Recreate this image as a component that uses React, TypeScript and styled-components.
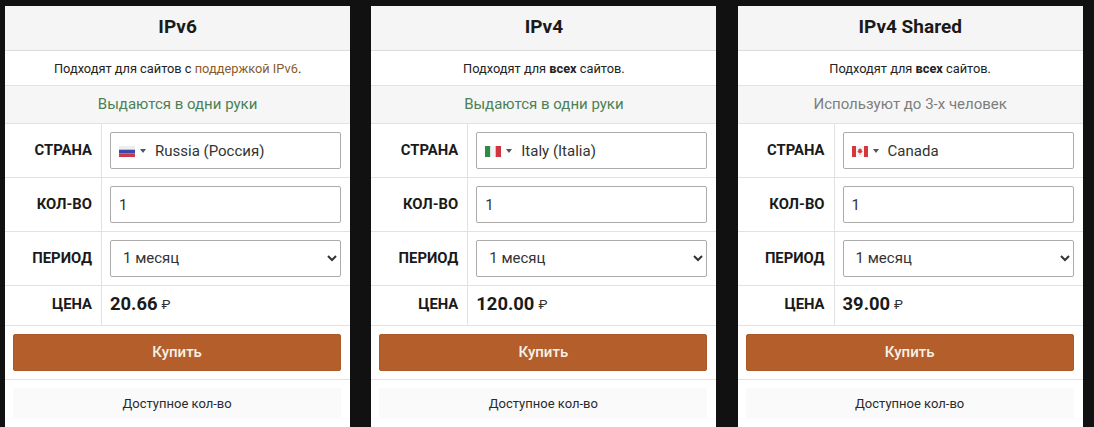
import React from 'react';

import styled, { createGlobalStyle } from 'styled-components';

const GlobalStyle = createGlobalStyle`
  html, body {
    margin: 0;
    padding: 0;
    height: 427px;
    overflow: hidden;
    background: #111111;
    font-family: Roboto, "Liberation Sans", sans-serif;
  }
`;

const Page = styled.div`
  width: 1094px;
  height: 427px;
  overflow: hidden;
  display: grid;
  grid-template-columns: repeat(3, 345.2px);
  column-gap: 21.1px;
  padding: 6px 0 0 5px;
  box-sizing: border-box;
`;

const Card = styled.section`
  background: #ffffff;
  color: #1c1c1c;
  height: 421px;
`;

const Title = styled.h2`
  margin: 0;
  height: 45px;
  padding-bottom: 3px;
  background: #f5f5f5;
  border-bottom: 1.5px solid #dcdcdc;
  box-sizing: border-box;
  display: flex;
  align-items: center;
  justify-content: center;
  font-size: 19px;
  font-weight: 700;
  color: #1a1a1a;
`;

const Note = styled.div`
  height: 34px;
  border-bottom: 1px solid #e2e2e2;
  display: flex;
  align-items: center;
  justify-content: center;
  white-space: pre;
  font-size: 12.8px;
  color: #222222;
`;

const Accent = styled.span`
  color: #8a5a2b;
`;

const Strong = styled.b`
  font-weight: 700;
`;

const Audience = styled.div<{ $shared?: boolean }>`
  height: 36px;
  padding-bottom: 1px;
  background: #f6f6f6;
  border-bottom: 1px solid #e2e2e2;
  display: flex;
  align-items: center;
  justify-content: center;
  font-size: 15px;
  color: ${(props) => (props.$shared ? '#7d7d7d' : '#4c8055')};
`;

const Row = styled.div<{ $height: number }>`
  height: ${(props) => props.$height}px;
  display: grid;
  grid-template-columns: 97px 1fr;
  border-bottom: 1px solid #e2e2e2;
`;

const Label = styled.div<{ $lift?: number }>`
  display: flex;
  align-items: center;
  justify-content: flex-end;
  padding-right: 9px;
  padding-bottom: ${(props) => props.$lift ?? 2}px;
  font-size: 14.8px;
  font-weight: 700;
  color: #1a1a1a;
  border-right: 1px solid #e2e2e2;
`;

const Cell = styled.div<{ $lift?: number }>`
  display: flex;
  align-items: center;
  padding: 0 9px ${(props) => props.$lift ?? 0}px 8px;
`;

const fieldStyles = `
  width: 100%;
  height: 37px;
  box-sizing: border-box;
  border: 1px solid #ababab;
  border-radius: 2px;
  background: #ffffff;
  font-family: Roboto, "Liberation Sans", sans-serif;
  font-size: 15px;
  color: #333333;
`;

const CountryField = styled.div`
  ${fieldStyles}
  display: flex;
  align-items: center;
  padding-left: 8px;
`;

const FlagWrap = styled.span`
  display: flex;
  width: 16px;
  height: 11px;
  margin-top: 1px;
`;

const FlagCaret = styled.span`
  width: 0;
  height: 0;
  margin: 0 9px 0 5px;
  border-left: 3px solid transparent;
  border-right: 3px solid transparent;
  border-top: 4px solid #555555;
`;

const NumberField = styled.input`
  ${fieldStyles}
  padding: 0 0 0 8px;
  outline: none;
`;

const PeriodField = styled.select`
  ${fieldStyles}
  padding: 0 0 2px 8px;
  outline: none;
`;

const PriceValue = styled.span`
  font-size: 18.4px;
  font-weight: 700;
  color: #1a1a1a;
`;

const Currency = styled.span`
  font-size: 13.5px;
  margin: 2px 0 0 4px;
  color: #333333;
`;

const ButtonRow = styled.div`
  height: 53px;
  display: flex;
  align-items: center;
  padding: 0 9px 0 8px;
  border-bottom: 1px solid #e2e2e2;
`;

const BuyButton = styled.button`
  width: 100%;
  height: 37px;
  padding: 0 0 2px;
  border: 1px solid #a85b28;
  border-radius: 2px;
  background: #b45f2b;
  color: #f7f1ea;
  font-family: Roboto, "Liberation Sans", sans-serif;
  font-size: 15px;
  font-weight: 500;
`;

const StockWrap = styled.div`
  padding: 8px 9px 0 8px;
`;

const StockBox = styled.div`
  height: 30px;
  background: #fafafa;
  display: flex;
  align-items: center;
  justify-content: center;
  font-size: 13px;
  color: #2a2a2a;
`;

function RussiaFlag() {
  return (
    <svg width="16" height="11" viewBox="0 0 16 11">
      <rect width="16" height="3.7" y="0" fill="#eeeeee" />
      <rect width="16" height="3.7" y="3.7" fill="#3f47a8" />
      <rect width="16" height="3.6" y="7.4" fill="#c93a4a" />
    </svg>
  );
}

function ItalyFlag() {
  return (
    <svg width="16" height="11" viewBox="0 0 16 11">
      <rect width="5.4" height="11" x="0" fill="#2f8a45" />
      <rect width="5.3" height="11" x="5.4" fill="#f3f3f3" />
      <rect width="5.3" height="11" x="10.7" fill="#d0343c" />
    </svg>
  );
}

function CanadaFlag() {
  return (
    <svg width="16" height="11" viewBox="0 0 16 11">
      <rect width="16" height="11" fill="#f5f5f5" />
      <rect width="4" height="11" x="0" fill="#d5383c" />
      <rect width="4" height="11" x="12" fill="#d5383c" />
      <path d="M8 2 L8.8 3.6 L10 3.2 L9.6 5.2 L10.6 5 L10 6.6 L8.3 7 L8.3 9 L7.7 9 L7.7 7 L6 6.6 L5.4 5 L6.4 5.2 L6 3.2 L7.2 3.6 Z" fill="#d5383c" />
    </svg>
  );
}

const plans = [
  {
    id: 'ipv6',
    title: 'IPv6',
    note: (
      <>
        Подходят для сайтов с <Accent>поддержкой IPv6</Accent>.
      </>
    ),
    audience: 'Выдаются в одни руки',
    shared: false,
    flag: <RussiaFlag />,
    country: 'Russia (Россия)',
    price: '20.66',
  },
  {
    id: 'ipv4',
    title: 'IPv4',
    note: (
      <>
        Подходят для <Strong>всех</Strong> сайтов.
      </>
    ),
    audience: 'Выдаются в одни руки',
    shared: false,
    flag: <ItalyFlag />,
    country: 'Italy (Italia)',
    price: '120.00',
  },
  {
    id: 'shared',
    title: 'IPv4 Shared',
    note: (
      <>
        Подходят для <Strong>всех</Strong> сайтов.
      </>
    ),
    audience: 'Используют до 3-х человек',
    shared: true,
    flag: <CanadaFlag />,
    country: 'Canada',
    price: '39.00',
  },
];

export default function App() {
  return (
    <Page>
      <GlobalStyle />
      {plans.map((plan) => (
        <Card key={plan.id}>
          <Title>{plan.title}</Title>
          <Note>{plan.note}</Note>
          <Audience $shared={plan.shared}>{plan.audience}</Audience>
          <Row $height={53}>
            <Label>СТРАНА</Label>
            <Cell>
              <CountryField>
                <FlagWrap>{plan.flag}</FlagWrap>
                <FlagCaret />
                {plan.country}
              </CountryField>
            </Cell>
          </Row>
          <Row $height={53}>
            <Label>КОЛ-ВО</Label>
            <Cell>
              <NumberField defaultValue="1" />
            </Cell>
          </Row>
          <Row $height={53}>
            <Label>ПЕРИОД</Label>
            <Cell>
              <PeriodField defaultValue="1">
                <option value="1">1 месяц</option>
              </PeriodField>
            </Cell>
          </Row>
          <Row $height={39}>
            <Label $lift={3}>ЦЕНА</Label>
            <Cell $lift={5}>
              <PriceValue>{plan.price}</PriceValue>
              <Currency>₽</Currency>
            </Cell>
          </Row>
          <ButtonRow>
            <BuyButton>Купить</BuyButton>
          </ButtonRow>
          <StockWrap>
            <StockBox>Доступное кол-во</StockBox>
          </StockWrap>
        </Card>
      ))}
    </Page>
  );
}
